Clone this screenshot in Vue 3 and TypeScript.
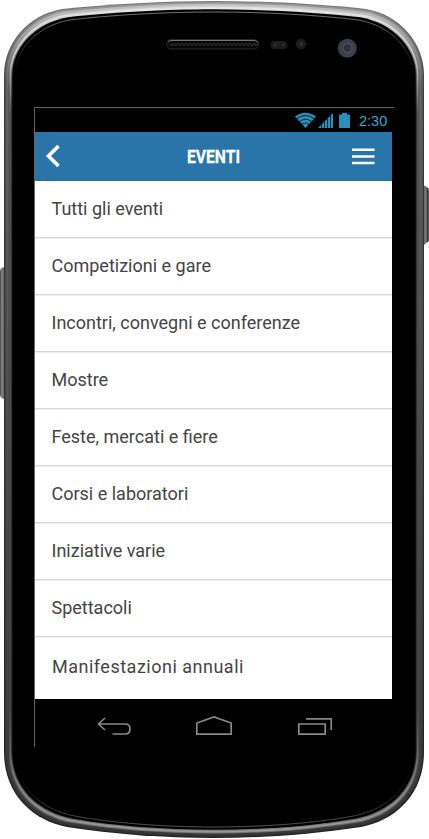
<script setup lang="ts">
interface Layer { d: string; fill: string }

const events: string[] = [
  'Tutti gli eventi',
  'Competizioni e gare',
  'Incontri, convegni e conferenze',
  'Mostre',
  'Feste, mercati e fiere',
  'Corsi e laboratori',
  'Iniziative varie',
  'Spettacoli',
  'Manifestazioni annuali',
]

// Outline of the phone body, moved inwards by i pixels.
function outline(i: number): string {
  const l = 4 + i
  const r = 424 - i
  const t = 1 + i
  const b = 838 - i
  const k = i * 0.7
  return `M${l} 75 C${l} ${43 + k} ${28 + k} ${t + 14} ${62 + k} ${t + 8}`
    + ` C110 ${t + 3} 165 ${t} 214 ${t} C263 ${t} 318 ${t + 3} ${366 - k} ${t + 8}`
    + ` C${400 - k} ${t + 14} ${r} ${43 + k} ${r} 75 V752`
    + ` C${r} ${793 - k} ${397 - k} ${b - 18} ${361 - k} ${b - 11}`
    + ` C315 ${b - 4} 265 ${b} 214 ${b} C163 ${b} 113 ${b - 4} ${67 + k} ${b - 11}`
    + ` C${31 + k} ${b - 18} ${l} ${793 - k} ${l} 752Z`
}

const layers: Layer[] = [
  { d: outline(0), fill: 'url(#edge)' },
  { d: outline(1), fill: 'url(#rim)' },
  { d: outline(2.7), fill: 'url(#band)' },
  { d: outline(4.5), fill: 'url(#groove)' },
  { d: outline(5.5), fill: 'url(#shine)' },
  { d: outline(7.2), fill: 'url(#lip)' },
  { d: outline(8.3), fill: '#000' },
]
const holes: number[] = Array.from({ length: 22 }, (_, i) => 170 + i * 4)
</script>

<template>
  <main class="phone">
    <svg class="shell" width="429" height="839" viewBox="0 0 429 839" aria-hidden="true">
      <defs>
        <linearGradient id="edge" x2="0" y2="1"><stop stop-color="#777" /><stop offset=".12" stop-color="#393939" /><stop offset="1" stop-color="#202020" /></linearGradient>
        <linearGradient id="rim" x2="0" y2="1"><stop stop-color="#999" /><stop offset=".1" stop-color="#555" /><stop offset=".5" stop-color="#444" /><stop offset="1" stop-color="#303030" /></linearGradient>
        <linearGradient id="band" x2="0" y2="1"><stop stop-color="#c2c2c2" /><stop offset=".1" stop-color="#686868" /><stop offset=".5" stop-color="#505050" /><stop offset="1" stop-color="#393939" /></linearGradient>
        <linearGradient id="groove" x2="0" y2="1"><stop stop-color="#ccc" /><stop offset=".1" stop-color="#4b4b4b" /><stop offset=".9" stop-color="#3b3b3b" /><stop offset="1" stop-color="#777" /></linearGradient>
        <linearGradient id="shine" x2="0" y2="1"><stop stop-color="#e3e3e3" /><stop offset=".06" stop-color="#c8c8c8" /><stop offset=".13" stop-color="#555" /><stop offset=".85" stop-color="#444" /><stop offset=".95" stop-color="#888" /><stop offset="1" stop-color="#999" /></linearGradient>
        <linearGradient id="lip" x2="0" y2="1"><stop stop-color="#eee" /><stop offset=".05" stop-color="#777" /><stop offset=".12" stop-color="#292929" /><stop offset=".9" stop-color="#292929" /><stop offset="1" stop-color="#777" /></linearGradient>
        <linearGradient id="inner" gradientUnits="userSpaceOnUse" x1="0" y1="10" x2="0" y2="829"><stop stop-color="#777" /><stop offset=".035" stop-color="#444" /><stop offset=".075" stop-color="#000" /><stop offset=".93" stop-color="#000" /><stop offset="1" stop-color="#555" /></linearGradient>
        <linearGradient id="leftkey"><stop stop-color="#444" /><stop offset=".4" stop-color="#888" /><stop offset="1" stop-color="#555" /></linearGradient>
        <linearGradient id="rightkey"><stop stop-color="#555" /><stop offset=".35" stop-color="#777" /><stop offset=".65" stop-color="#666" /><stop offset=".8" stop-color="#222" /><stop offset="1" stop-color="#777" /></linearGradient>
      </defs>
      <path d="M5 267 Q0 267 0 272 V394 Q0 399 5 399Z" fill="url(#leftkey)" />
      <path d="M423 185 L427 187 Q429 188 429 191 V241 L424 245Z" fill="url(#rightkey)" />
      <path v-for="layer in layers" :key="layer.fill" :d="layer.d" :fill="layer.fill" />
      <path :d="outline(11)" fill="none" stroke="url(#inner)" stroke-width="1" />

      <rect x="166.500" y="39.500" width="92" height="9.500" rx="4.500" fill="#080808" stroke="#292929" />
      <path d="M168 42 Q169 40.500 171 40.500 H254 Q257 40.500 258 42.500" fill="none" stroke="#777" />
      <g fill="none" stroke="#383838" stroke-width="1">
        <path v-for="x in holes" :key="x" :d="`M${x} 43 l2 3 l2 -3`" />
      </g>
      <rect x="270.500" y="41" width="17" height="8" rx="4" fill="#1c1c1c" />
      <circle cx="275" cy="45" r="1.500" fill="#303030" /><circle cx="283" cy="45" r="1.500" fill="#303030" />
      <circle cx="301" cy="44" r="5.300" fill="#1c1c1c" /><circle cx="301" cy="44" r="2" fill="#303030" />
      <circle cx="347.300" cy="48.300" r="9.500" fill="#3b404a" /><circle cx="347.300" cy="48" r="5.500" fill="#454a54" />
      <circle cx="347.300" cy="48" r="3.400" fill="#292d37" /><circle cx="347.300" cy="48" r="1.500" fill="#353a45" />
      <path d="M34.500 747 V107.500 H394" fill="none" stroke="#666" />
    </svg>

    <section class="screen">
      <div class="status">
        <svg width="56" height="17" viewBox="295 112 56 17" aria-hidden="true">
          <path d="M295 116.500 Q305.500 109 316 116.500 L305.500 128Z" fill="#2a8fba" />
          <path d="M297 118.500 Q305.500 112.500 314 118.500 M299.500 121.500 Q305.500 117 311.500 121.500 M302 124.300 Q305.500 121.500 309 124.300" fill="none" stroke="#001019" stroke-width=".9" />
          <path d="M318 128 L333 113 V128Z" fill="#2a8fba" />
          <path d="M321.500 123 V128 M324.500 120 V128 M327.500 117 V128 M330.500 114 V128" stroke="#04202c" stroke-width=".9" />
          <path d="M339 114.500 H342 V113 H347 V114.500 H350 V128 H339Z" fill="#2a8fba" />
        </svg>
        <time>2:30</time>
      </div>
      <header class="bar">
        <svg width="16" height="24" viewBox="0 0 16 24" aria-hidden="true"><path d="M13.500 2 L3.500 12 L13.500 22" fill="none" stroke="#fff" stroke-width="3.600" /></svg>
        <svg class="title" width="54" height="24" viewBox="0 0 54 24"><text x="0" y="18.500" textLength="53" lengthAdjust="spacingAndGlyphs">EVENTI</text></svg>
        <svg width="23" height="17" viewBox="0 0 23 17" aria-hidden="true"><path d="M0 1.700 H22.500 M0 8.400 H22.500 M0 15.100 H22.500" stroke="#fff" stroke-width="2.500" /></svg>
      </header>
      <ul class="list">
        <li v-for="name in events" :key="name"><span>{{ name }}</span></li>
      </ul>
      <nav class="nav">
        <svg width="36" height="21" viewBox="96 715 36 21"><path d="M105 718 L98.500 724 L105 730 M99 724 H125 Q130 724 130 729 Q130 734 125 734 H112.500" /></svg>
        <svg width="38" height="21" viewBox="195 715 38 21"><path d="M196.800 734.200 V723 L214 717 L231.200 723 V734.200Z" /></svg>
        <svg width="36" height="21" viewBox="297 715 36 21"><path d="M298.800 724 H325.200 V734.200 H298.800Z M306 718.800 H331.200 V730" /></svg>
      </nav>
    </section>
  </main>
</template>

<style>
body { margin: 0; background: #fff; overflow: hidden; }
</style>
<style scoped>
.phone { position: relative; width: 429px; height: 839px; box-sizing: border-box; padding: 108px 37px 91px 35px; font-family: Roboto, "Liberation Sans", sans-serif; }
.shell { position: absolute; left: 0; top: 0; display: block; }
.screen { position: relative; width: 357px; display: flex; flex-direction: column; }
.status { height: 24px; display: flex; align-items: center; justify-content: flex-end; gap: 8px; padding: 1px 5px 0 0; box-sizing: border-box; color: #37a9d6; font-size: 15px; line-height: 23px; }
.status time { width: 28px; white-space: nowrap; font-family: "Liberation Sans", sans-serif; font-size: 14.5px; padding-top: 1px; }
.bar { height: 49px; box-sizing: border-box; display: flex; align-items: center; justify-content: space-between; background: #2975a9; border-bottom: 1px solid #2470a3; padding: 0 17px 0 10px; }
.title { margin-left: 14px; fill: #fff; stroke: #fff; stroke-width: .3px; font-size: 18.5px; font-weight: 700; overflow: visible; }
.list { list-style: none; margin: 0; padding: 0; background: #fff; color: #444; }
.list li { height: 57px; box-sizing: border-box; border-bottom: 1px solid #d8d8d8; box-shadow: 0 1px 0 #eee; display: flex; align-items: center; padding: 0 0 1px 16.5px; font-size: 18px; line-height: 24px; white-space: nowrap; }
.list li:last-child { height: 62px; border: 0; box-shadow: none; padding-left: 17px; padding-bottom: 3px; letter-spacing: .5px; }
.nav { height: 48px; display: flex; padding-top: 16px; box-sizing: border-box; justify-content: space-between; padding-left: 61px; padding-right: 59px; }
.nav svg:nth-child(2) { margin-right: 2px; }
.nav path { fill: none; stroke: #888; stroke-width: 1.7; }
</style>
